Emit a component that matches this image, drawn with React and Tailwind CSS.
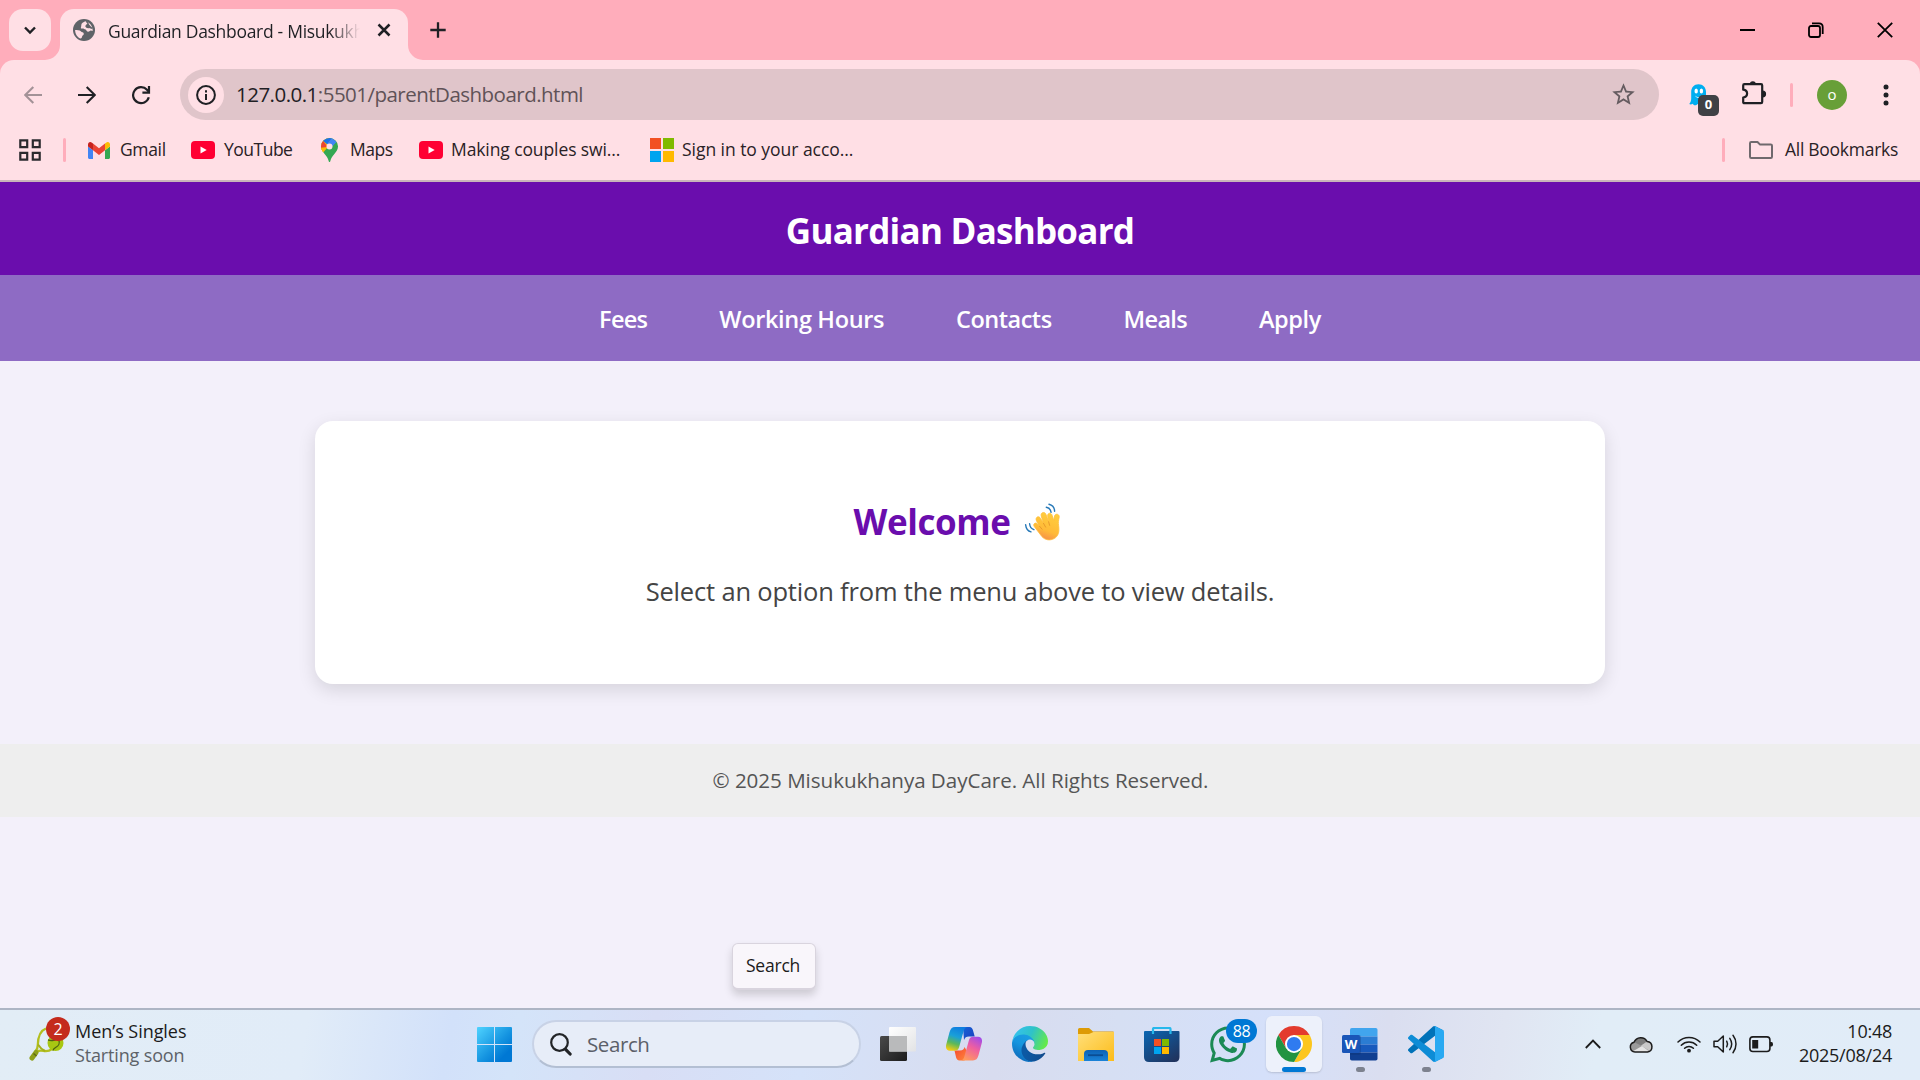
import { FaWhatsapp } from "react-icons/fa";
import { MdStarBorder } from "react-icons/md";

/* ---------- Browser icons ---------- */

function GlobeIcon() {
  return (
    <svg width="22" height="22" viewBox="0 0 22 22">
      <circle cx="11" cy="11" r="11" fill="#5f6368" />
      <path d="M12.2 2.3C10.6 3.4 8.2 4 8.3 5.9c.1 1.5-.6 2.4-.4 3.4.3 1.3 2.6.6 4.1 1 1.5.5 1.4 2.2 2.9 2.5 1.4.2 1.6-1.3 3-1.3.7 0 1.300.2 1.800.5.200-3.800-2.200-8.600-7.500-9.700z" fill="#ffdfe5" />
      <path d="M2.100 10.900c1.700.2 4.700-.1 5.700 1.300.8 1.200 3 .7 3 2.500 0 1.500-1.500 1.500-1.700 2.900-.1 1-.5 1.700-1.200 2C4.500 18.300 2.100 15.200 2.100 10.900z" fill="#ffdfe5" />
      <path d="M13.300 2.200c.6 1.400 1.900 1.300 1.700 2.600-.2 1-1.700 1-2 2.200-.3 1 1.300 1.700 2.600 1.500 1.700-.3 2.300.8 3.800.8" stroke="#5f6368" strokeWidth="1.300" fill="#5f6368" />
    </svg>
  );
}

function ChevronDown() {
  return (
    <svg width="12" height="9" viewBox="0 0 12 9" fill="none" stroke="#1f2024" strokeWidth="2.400">
      <path d="M1 1.500l5 5 5-5" />
    </svg>
  );
}

function CrossIcon() {
  return (
    <svg width="14" height="14" viewBox="0 0 14 14" fill="none" stroke="#1f2024" strokeWidth="2.500">
      <path d="M1.500 1.500l11 11M12.500 1.500l-11 11" />
    </svg>
  );
}

function PlusIcon() {
  return (
    <svg width="16" height="16" viewBox="0 0 16 16" fill="none" stroke="#1f2024" strokeWidth="2.300">
      <path d="M8 .3v15.400M.3 8h15.400" />
    </svg>
  );
}

function ArrowIcon({ className }) {
  return (
    <svg width="18" height="18" viewBox="0 0 18 18" fill="none" stroke="currentColor" strokeWidth="2.100" className={className}>
      <path d="M0 9h16.500M8.700.9L16.800 9l-8.100 8.100" />
    </svg>
  );
}

function ReloadIcon() {
  return (
    <svg width="20" height="20" viewBox="0 0 20 20" fill="none" stroke="#1f2024" strokeWidth="2.200">
      <path d="M17.800 12.300A8 8 0 1 1 16 4.700L18 6.900" />
      <path d="M18 1v6.700h-6.600" />
    </svg>
  );
}

function InfoIcon() {
  return (
    <svg width="20" height="20" viewBox="0 0 20 20" fill="none" stroke="#1f2024" strokeWidth="2">
      <circle cx="10" cy="10" r="8.900" />
      <path d="M10 9v6M10 5.200v2.200" />
    </svg>
  );
}

function GhostIcon() {
  return (
    <svg width="18" height="22" viewBox="0 0 18 22">
      <path d="M9.500.3C5 .3 2.200 3.600 2.200 8v6.500c0 2.300-.8 4.300-2 5.600 1.300.6 2.600.3 3.400-.3.600.9 1.300 1.500 2.400 1.500s1.900-.7 2.600-1.400c.8.8 1.600 1.300 2.700 1.200 4-.5 5.700-3.100 5.700-6.600V8C17 3.600 14 .3 9.500.3z" fill="#00aef0" />
      <ellipse cx="7.200" cy="7" rx="1.700" ry="2.500" fill="#fff" />
      <ellipse cx="12.400" cy="7" rx="1.700" ry="2.500" fill="#fff" />
      <path d="M6 11.500c2 2 5.500 2 7.500 0-.5 2.800-6.500 3.300-7.500 0z" fill="#fff" />
    </svg>
  );
}

function PuzzleIcon() {
  return (
    <svg width="26" height="26" viewBox="0 0 26 26" fill="none" stroke="#1f2024" strokeWidth="2.200" strokeLinejoin="round">
      <path d="M3.400 4.200h16.600q1.200 0 1.200 1.200v16.600q0 1.200-1.200 1.200H3.400q-1.200 0-1.200-1.200v-4.400c2.600-.4 3.900-1.800 3.900-4s-1.300-3.500-3.900-3.900V5.400q0-1.200 1.200-1.200z" />
      <path d="M8.800 4.200a3 3 0 0 1 6 0z" fill="#1f2024" stroke="none" />
      <path d="M21.600 11a2.900 2.900 0 0 1 0 5.800z" fill="#1f2024" strokeWidth="1.200" />
    </svg>
  );
}

function AppsGridIcon() {
  return (
    <svg width="22" height="22" viewBox="0 0 22 22" fill="none" stroke="#2a2a2e" strokeWidth="2.200">
      <path d="M1.300 1.300h6.900v6.900H1.300zM13.800 1.300h6.900v6.900h-6.900zM1.300 13.800h6.900v6.900H1.300zM13.800 13.800h6.900v6.900h-6.900z" />
    </svg>
  );
}

function GmailIcon() {
  return (
    <svg width="22" height="17" viewBox="52 42 88 66" preserveAspectRatio="none">
      <path fill="#4285f4" d="M58 108h14V74L52 59v43c0 3.320 2.690 6 6 6" />
      <path fill="#34a853" d="M120 108h14c3.320 0 6-2.690 6-6V59l-20 15" />
      <path fill="#fbbc04" d="M120 48v26l20-15v-8c0-7.420-8.470-11.650-14.400-7.200" />
      <path fill="#ea4335" d="M72 74V48l24 18 24-18v26L96 92" />
      <path fill="#c5221f" d="M52 51v8l20 15V48l-5.600-4.200c-5.940-4.450-14.400-.22-14.400 7.200" />
    </svg>
  );
}

function YouTubeIcon() {
  return (
    <svg width="24" height="18" viewBox="0 0 24 18">
      <rect width="24" height="18" rx="4" fill="#ff0033" />
      <path d="M9.500 5.600v6.800L15.700 9z" fill="#fff" />
    </svg>
  );
}

function MapsIcon() {
  return (
    <svg width="17" height="24" viewBox="0 0 17 24">
      <defs>
        <clipPath id="pin">
          <path d="M8.500 0A8.400 8.400 0 0 0 0 8.500c0 3.400 1.900 5.300 4 8 1.800 2.300 3 3.700 3.500 6 .3 1.400.6 1.500 1 1.500s.7-.1 1-1.500c.5-2.300 1.700-3.700 3.500-6 2.100-2.700 4-4.600 4-8A8.400 8.400 0 0 0 8.500 0z" />
        </clipPath>
      </defs>
      <g clipPath="url(#pin)">
        <rect width="17" height="24" fill="#34a853" />
        <path d="M0 17L13 2 6-1H-1z" fill="#fbbc04" />
        <path d="M-1 17.500L8.500 6.500 5 3-1 8z" fill="#fbbc04" />
        <path d="M-1 10L6.500 9 2 2.500-1 5z" fill="#ea4335" />
        <path d="M2 2.800L6.300 6.600 11.500 0H2z" fill="#1a73e8" />
        <path d="M11.200-.1L6 6l3.500 4.200L15.500 4z" fill="#4285f4" />
      </g>
      <circle cx="8.500" cy="8.400" r="3" fill="#ffdfe5" />
    </svg>
  );
}

function MicrosoftIcon() {
  return (
    <div className="grid size-6 grid-cols-2 gap-0.5">
      <div className="bg-[#f25022]" />
      <div className="bg-[#7fba00]" />
      <div className="bg-[#00a4ef]" />
      <div className="bg-[#ffb900]" />
    </div>
  );
}

function FolderOutlineIcon() {
  return (
    <svg width="24" height="18" viewBox="0 0 24 18" fill="none" stroke="#6f696d" strokeWidth="2" strokeLinejoin="round">
      <path d="M1 2.200Q1 1 2.200 1h6.300l2.600 2.600h10.700Q23 3.600 23 4.800v11Q23 17 21.800 17H2.200Q1 17 1 15.800z" />
    </svg>
  );
}

/* ---------- Page emoji ---------- */

function WaveEmoji() {
  return (
    <svg width="38" height="38" viewBox="0 0 38 38">
      <defs>
        <linearGradient id="skin" x1=".7" y1="0" x2=".35" y2="1">
          <stop offset="0" stopColor="#ffcf3e" />
          <stop offset=".65" stopColor="#ffba38" />
          <stop offset="1" stopColor="#f58b4c" />
        </linearGradient>
      </defs>
      <path d="M10.200 23.500c-1.700-2.500 1.600-4.700 3.300-2.600l2 2.300-3-5.300c-1.700-3.600 2.200-5.700 4-2.600l3 5-2.300-7.300c-1-3.600 3.500-5 4.800-1.500l2.600 7.300-.9-5.800c-.4-3.300 3.600-3.800 4.400-.7l1.700 5.500c.4-2 .2-3.800.9-5.300 1.500-2.500 5-1 4.500 1.700-.7 3.400-1.100 5.200-.6 8.600 1 6.500-.5 10.500-4.300 12.700-4.200 2.400-9.200 1.600-12.300-1.800z" fill="url(#skin)" stroke="#ffbf3a" strokeWidth=".8" />
      <path d="M15.500 23.200l2.600 3M19.500 20.300l2.100 3.800M24.600 18.800l1 3.500" stroke="#e89a2b" strokeWidth="1" fill="none" strokeLinecap="round" />
      <g stroke="#2779b8" strokeWidth="1.400" fill="none" strokeLinecap="round">
        <path d="M22.300 4.300c2.500.4 4.300 2.200 4.800 5" />
        <path d="M25 1.200c3.200.8 5.500 3.400 5.600 7" />
        <path d="M5.600 20.700c.3 3 1.800 5.100 4.300 6" />
        <path d="M1.600 21.600c.4 3.800 2.300 6.500 5.400 7.300" />
      </g>
    </svg>
  );
}

/* ---------- Taskbar icons ---------- */

function TennisIcon() {
  return (
    <svg width="36" height="34" viewBox="0 0 36 34" fill="none">
      <path d="M17 1.500C11.500 3.500 9 9 8.800 18c0 3-.8 5-2.800 7.300 3-2 6-2 9-1.300 3 .5 5.500 0 8-2" stroke="#b3bf1f" strokeWidth="2.300" />
      <path d="M9 17.500c1.500 2.500 3 4.500 7 6.500" stroke="#a4b01c" strokeWidth="2" />
      <path d="M3 31l4-5.500" stroke="#8ea019" strokeWidth="5" strokeLinecap="round" />
      <path d="M4.500 26.500l3 2.500" stroke="#5f6b14" strokeWidth="1.600" />
      <circle cx="26.500" cy="16" r="8" fill="#a8c712" />
      <path d="M19 13c4 .5 7 1.500 8-1M24 23.500c.5-4 8-3 6-10" stroke="#4f6412" strokeWidth="1.300" />
    </svg>
  );
}

function StartIcon() {
  return (
    <svg width="35" height="35" viewBox="0 0 35 35">
      <defs>
        <linearGradient id="win" x1="0" y1="0" x2="1" y2="1">
          <stop offset="0" stopColor="#4fd3ff" />
          <stop offset=".55" stopColor="#1493e0" />
          <stop offset=".8" stopColor="#0078d4" />
        </linearGradient>
        <clipPath id="winclip">
          <path d="M1 0H17V17H0V1Q0 0 1 0zM18 0h16q1 0 1 1v16H18zM0 18h17v17H1q-1 0-1-1zM18 18h17v16q0 1-1 1H18z" />
        </clipPath>
      </defs>
      <rect width="35" height="35" fill="url(#win)" clipPath="url(#winclip)" />
    </svg>
  );
}

function SearchGlyph() {
  return (
    <svg width="22" height="23" viewBox="0 0 22 23" fill="none" stroke="#222427">
      <circle cx="9.500" cy="9.500" r="8.300" strokeWidth="2.200" />
      <path d="M15.600 16.300l4.500 4.700" strokeWidth="3.200" strokeLinecap="round" />
    </svg>
  );
}

function TaskViewIcon() {
  return (
    <svg width="36" height="34" viewBox="0 0 36 34">
      <defs>
        <linearGradient id="tvd" x1="0" y1="0" x2="1" y2="1">
          <stop offset="0" stopColor="#4a4a4a" />
          <stop offset="1" stopColor="#1c1c1c" />
        </linearGradient>
        <linearGradient id="tvl" x1="0" y1="0" x2="1" y2="1">
          <stop offset="0" stopColor="#fff" />
          <stop offset="1" stopColor="#e2e3e5" />
        </linearGradient>
      </defs>
      <rect y="9" width="27" height="25" rx="1.500" fill="url(#tvd)" />
      <rect x="9" width="27" height="24.500" rx="1" fill="url(#tvl)" />
      <path d="M9 9h18v15.500H9z" fill="#b9babb" />
    </svg>
  );
}

function CopilotIcon() {
  return (
    <svg width="36" height="34" viewBox="0 0 36 34">
      <defs>
        <linearGradient id="cp1" x1=".6" y1="0" x2=".3" y2="1">
          <stop offset="0" stopColor="#0f7de0" />
          <stop offset=".4" stopColor="#1aa0d8" />
          <stop offset=".7" stopColor="#5bb85a" />
          <stop offset="1" stopColor="#f2cc12" />
        </linearGradient>
        <linearGradient id="cp2" x1=".8" y1="0" x2=".3" y2="1">
          <stop offset="0" stopColor="#a24ce8" />
          <stop offset=".45" stopColor="#ee5fa0" />
          <stop offset="1" stopColor="#ff9a5e" />
        </linearGradient>
        <linearGradient id="cp3" x1="0" y1="0" x2="1" y2="1">
          <stop offset="0" stopColor="#1463d6" />
          <stop offset="1" stopColor="#1d3fbf" />
        </linearGradient>
        <linearGradient id="cp4" x1="0" y1="0" x2="1" y2="1">
          <stop offset="0" stopColor="#f5452f" />
          <stop offset="1" stopColor="#ff8a3c" />
        </linearGradient>
      </defs>
      <path d="M17 0h6.500c2 0 3 1.500 3.400 3l1.800 6.500H23c-3 0-4 1-5 3.500z" fill="url(#cp3)" />
      <path d="M18.500 33.500h-5c-2 0-3-1.500-3.400-3L8.500 23.500H14c3 0 4-1.500 4.500-3.500l3 5z" fill="url(#cp4)" />
      <path d="M9 0h12c-2 .5-2.800 2-3.500 4.500L13 20.500c-.8 2.200-2 3.200-4.200 3.200H4c-3.500 0-4.700-2.700-3.700-6.500l3.200-12C4.500 1.800 6 0 9 0z" fill="url(#cp1)" />
      <path d="M27 33.500H15c2-.5 2.800-2 3.500-4.500L23 13c.8-2.200 2-3.200 4.200-3.200H32c3.500 0 4.700 2.700 3.700 6.500l-3.200 12c-1 3.400-2.500 5.200-5.500 5.200z" fill="url(#cp2)" />
    </svg>
  );
}

function EdgeIcon() {
  return (
    <svg width="36" height="36" viewBox="0 0 256 256">
      <defs>
        <linearGradient id="e1" x1=".2" y1="0" x2="1" y2="0">
          <stop offset="0" stopColor="#0c59a4" />
          <stop offset="1" stopColor="#114a8b" />
        </linearGradient>
        <linearGradient id="e2" x1=".7" y1=".1" x2=".3" y2="1">
          <stop offset="0" stopColor="#1b9de2" />
          <stop offset=".4" stopColor="#1595df" />
          <stop offset="1" stopColor="#0d67b8" />
        </linearGradient>
        <linearGradient id="e3" x1="0" y1=".3" x2="1" y2=".6">
          <stop offset="0" stopColor="#35c1f1" />
          <stop offset=".5" stopColor="#2fc2c8" />
          <stop offset="1" stopColor="#66eb48" />
        </linearGradient>
      </defs>
      <path fill="url(#e1)" d="M231 190.500c-3.400 1.800-6.900 3.400-10.500 4.700a101.500 101.500 0 0 1-35.900 6.400c-47.300 0-88.500-32.500-88.500-74.300 0-11.400 6.300-21.900 16.400-27.300-42.800 1.800-53.800 46.400-53.800 72.500 0 73.900 68.100 81.400 82.800 81.400 7.900 0 19.800-2.300 27-4.600l1.300-.4a128.300 128.300 0 0 0 66.600-52.800 4 4 0 0 0-5.400-5.600z" />
      <path fill="url(#e2)" d="M105.700 241.400a79.200 79.200 0 0 1-22.700-21.300 80.700 80.700 0 0 1 29.500-120c3.200-1.500 8.500-4.100 15.600-4a32.400 32.400 0 0 1 25.700 13 31.900 31.900 0 0 1 6.300 18.700c0-.2 24.500-79.600-80-79.600-43.900 0-80 41.700-80 78.200 0 19.300 4.100 38.600 12.100 56a128 128 0 0 0 156.400 67 75.500 75.500 0 0 1-62.800-8z" />
      <path fill="url(#e3)" d="M152.300 148.900c-.8 1-3.300 2.500-3.300 5.700 0 2.600 1.700 5.100 4.700 7.200 14.400 10 41.500 8.700 41.600 8.700 10.700 0 21.100-2.900 30.300-8.300a61.400 61.400 0 0 0 30.400-52.900c.3-22.400-8-37.300-11.300-43.900C223.500 23.900 177.700 0 128 0A128 128 0 0 0 0 126.200c.5-36.500 36.800-66 80-66 3.500 0 23.500.3 42 10.100 16.300 8.600 24.900 18.900 30.800 29.200 6.200 10.700 7.300 24.100 7.300 29.500 0 5.300-2.700 13.300-7.800 19.900z" />
    </svg>
  );
}

function ExplorerIcon() {
  return (
    <svg width="36" height="33" viewBox="0 0 36 33">
      <defs>
        <linearGradient id="fx" x1="0" y1="0" x2="1" y2="1">
          <stop offset="0" stopColor="#ffdf7a" />
          <stop offset="1" stopColor="#fcbc19" />
        </linearGradient>
        <linearGradient id="fb" x1="0" y1="0" x2="0" y2="1">
          <stop offset="0" stopColor="#0e62b4" />
          <stop offset="1" stopColor="#1a83d8" />
        </linearGradient>
      </defs>
      <path d="M0 7V1.500Q0 0 1.500 0H11l4 3.500h20q1 0 1 1V7z" fill="#dd9b05" />
      <path d="M0 6h11l4.500-2H36v29H0z" fill="url(#fx)" />
      <path d="M6 33v-7q0-4 4-4h16q4 0 4 4v7z" fill="url(#fb)" />
      <path d="M10 27.200h15" stroke="#0b4d93" strokeWidth="1.800" />
    </svg>
  );
}

function StoreIcon() {
  return (
    <svg width="36" height="35" viewBox="0 0 36 35">
      <defs>
        <linearGradient id="st" x1="0" y1="0" x2=".8" y2="1">
          <stop offset="0" stopColor="#0a66b2" />
          <stop offset="1" stopColor="#20345f" />
        </linearGradient>
      </defs>
      <path d="M0 5Q0 4 1 4h33.500q1 0 1 1v25q0 5-5 5H5q-5 0-5-5z" fill="url(#st)" />
      <path d="M9 7V2q0-1 1-1h15.500q1 0 1 1v5" fill="none" stroke="#27b8ec" strokeWidth="2.200" />
      <path d="M10 12h7v7h-7z" fill="#f25022" />
      <path d="M18 12h7v7h-7z" fill="#7fba00" />
      <path d="M10 20h7v7h-7z" fill="#00a4ef" />
      <path d="M18 20h7v7h-7z" fill="#ffb900" />
    </svg>
  );
}

function ChromeIcon() {
  return (
    <svg width="36" height="36" viewBox="0 0 48 48">
      <path d="M24 12h20.780A24 24 0 0 0 3.210 12L13.610 30z" fill="#e33b2e" />
      <path d="M34.390 30L24 48A24 24 0 0 0 44.780 12H24z" fill="#fcc61e" />
      <path d="M13.610 30L3.210 12A24 24 0 0 0 24 48l10.390-18z" fill="#229342" />
      <circle cx="24" cy="24" r="12" fill="#fff" />
      <circle cx="24" cy="24" r="9.500" fill="#2f7bf0" />
    </svg>
  );
}

function WordIcon() {
  return (
    <div className="relative h-[33px] w-9">
      <svg width="36" height="33" viewBox="0 0 36 33">
        <defs>
          <clipPath id="wclip">
            <rect x="8" width="27.500" height="32.500" rx="1.800" />
          </clipPath>
        </defs>
        <g clipPath="url(#wclip)">
          <path d="M8 0h28v8.500H8z" fill="#41a5ee" />
          <path d="M8 8.500h28v8H8z" fill="#2b7cd3" />
          <path d="M8 16.500h28v8H8z" fill="#185abd" />
          <path d="M8 24.500h28V33H8z" fill="#103f91" />
        </g>
        <path d="M8 7h9q1.800 0 1.800 1.800V25q0 1.800-1.800 1.800H8z" fill="#0b2f6b" opacity=".35" />
        <rect y="7" width="17.800" height="18" rx="1.600" fill="#1a56b8" />
      </svg>
      <span className="absolute top-[7px] left-0 w-[18px] text-center text-[13px] leading-[18px] font-bold text-white">W</span>
    </div>
  );
}

function CodeIcon() {
  return (
    <svg width="36" height="36" viewBox="0 0 100 100">
      <path fill="#0072b8" d="M96.460 10.800L75.860.88C73.470-.27 70.620.21 68.750 2.080L1.300 63.580c-1.820 1.660-1.810 4.510 0 6.170l5.510 5c1.490 1.350 3.720 1.450 5.320.24L93.360 13.370C96.090 11.300 100 13.250 100 16.670v-.24c0-2.400-1.380-4.590-3.540-5.630z" />
      <path fill="#0d8cd6" d="M96.460 89.200l-20.600 9.920c-2.390 1.150-5.240.67-7.110-1.200L1.300 36.420c-1.820-1.660-1.810-4.510 0-6.170l5.510-5c1.490-1.350 3.720-1.450 5.320-.24l81.230 61.620c2.730 2.070 6.640.12 6.640-3.300v.24c0 2.400-1.380 4.590-3.540 5.630z" />
      <path fill="#29a9f2" d="M75.860 99.130c-2.390 1.150-5.240.66-7.110-1.210 2.310 2.310 6.250.67 6.250-2.590V4.670c0-3.260-3.940-4.890-6.250-2.590C70.620.21 73.470-.27 75.860.87l20.600 9.910c2.160 1.040 3.540 3.230 3.540 5.630v67.180c0 2.400-1.380 4.590-3.540 5.630z" />
    </svg>
  );
}

function CloudIcon() {
  return (
    <svg width="24" height="17" viewBox="0 0 24 17">
      <defs>
        <clipPath id="cloud">
          <path d="M6 16a5 5 0 0 1-1-9.800A7.300 7.300 0 0 1 18.200 5.500 5.300 5.300 0 0 1 18.500 16z" />
        </clipPath>
      </defs>
      <g clipPath="url(#cloud)">
        <path d="M0 0h24v17H0z" fill="#9a9a9a" />
        <path d="M5 6l8 4 6-6V0H5z" fill="#7d7d7d" />
        <path d="M12 9.500L19 5l5 4v8z" fill="#c9c9c9" />
        <path d="M1 17l12-7 8 6v1z" fill="#e4e4e4" />
      </g>
      <path d="M6 16a5 5 0 0 1-1-9.800A7.300 7.300 0 0 1 18.200 5.500 5.300 5.300 0 0 1 18.500 16z" fill="none" stroke="#1c1c1c" strokeWidth="1.500" />
    </svg>
  );
}

function WifiIcon() {
  return (
    <svg width="24" height="18" viewBox="0 0 24 18" fill="none" stroke="#1c1c1c" strokeWidth="1.500" strokeLinecap="round">
      <path d="M1 7a15.500 15.500 0 0 1 22 0M4.300 10.300a10.900 10.900 0 0 1 15.400 0M7.600 13.300a6.200 6.200 0 0 1 8.800 0" />
      <circle cx="12" cy="15.700" r="1.900" fill="#1c1c1c" stroke="none" />
    </svg>
  );
}

function SpeakerIcon() {
  return (
    <svg width="25" height="20" viewBox="0 0 25 20" fill="none" stroke="#1c1c1c" strokeWidth="1.500" strokeLinecap="round" strokeLinejoin="round">
      <path d="M1 7.200h3.700L10.300 2v16l-5.600-5.200H1z" />
      <path d="M13.700 7.200c1 1.700 1 3.900 0 5.600M16.800 4.400c2.300 3.400 2.300 7.800 0 11.200M20 1.300c4 5.200 4 12.200 0 17.400" />
    </svg>
  );
}

function BatteryIcon() {
  return (
    <svg width="25" height="17" viewBox="0 0 25 17">
      <rect x=".9" y=".9" width="20" height="14.600" rx="3" fill="none" stroke="#1c1c1c" strokeWidth="1.600" />
      <path d="M21 6h1.500q1.500 0 1.500 2.200t-1.500 2.200H21z" fill="#1c1c1c" />
      <rect x="3.200" y="4" width="6" height="8.500" fill="#1c1c1c" />
    </svg>
  );
}

/* ---------- Sections ---------- */

function TabStrip() {
  return (
    <div className="flex h-[60px] items-start bg-[#ffadbb] pt-[9px]">
      <button className="ml-[9px] flex size-[42px] items-center justify-center rounded-[14px] bg-[#ffdfe5]">
        <ChevronDown />
      </button>
      <div className="relative ml-[9px] flex h-[51px] w-[348px] items-center rounded-t-[14px] bg-[#ffdfe5] pb-[9px] pl-[13px]">
        <svg className="absolute -left-[15px] bottom-0" width="15" height="15">
          <path d="M15 0v15H0A15 15 0 0 0 15 0z" fill="#ffdfe5" />
        </svg>
        <svg className="absolute -right-[15px] bottom-0" width="15" height="15">
          <path d="M0 0v15h15A15 15 0 0 1 0 0z" fill="#ffdfe5" />
        </svg>
        <GlobeIcon />
        <div className="mt-[2px] ml-[13px] w-[252px] bg-linear-to-r from-[#1f2024] from-88% to-transparent bg-clip-text text-[17.5px] leading-6 tracking-[-0.3px] whitespace-nowrap text-transparent">
          Guardian Dashboard - Misukukh
        </div>
        <div className="ml-[17px]">
          <CrossIcon />
        </div>
      </div>
      <div className="mt-[13px] ml-[22px]">
        <PlusIcon />
      </div>
      <div className="mt-[13px] mr-[27px] ml-auto flex items-center gap-[53px]">
        <div className="h-0.5 w-[15px] bg-black" />
        <svg width="16" height="16" viewBox="0 0 16 16" fill="none" stroke="#000" strokeWidth="1.800">
          <rect x="1" y="4" width="11" height="11" rx="2" />
          <path d="M4 1.300h7Q14.700 1.300 14.700 5v7" />
        </svg>
        <svg width="16" height="16" viewBox="0 0 16 16" fill="none" stroke="#000" strokeWidth="1.800">
          <path d="M.8.8l14.400 14.400M15.200.8L.8 15.200" />
        </svg>
      </div>
    </div>
  );
}

function Toolbar() {
  return (
    <div className="bg-[#ffadbb]">
      <div className="flex h-[69px] items-center rounded-t-[14px] bg-[#ffdfe5]">
        <ArrowIcon className="ml-6 rotate-180 text-[#a39297]" />
        <ArrowIcon className="ml-9 text-[#1f2024]" />
        <div className="ml-[35px]">
          <ReloadIcon />
        </div>
        <div className="ml-[29px] flex h-[51px] w-[1479px] items-center rounded-full bg-[#e0c5ca] pl-2">
          <div className="flex size-9 items-center justify-center rounded-full bg-[#ffdfe5]">
            <InfoIcon />
          </div>
          <div className="-mt-[1px] ml-3 text-[20.5px] tracking-[-0.52px] text-[#5f5257]">
            <span className="text-[#1f2024]">127.0.0.1</span>:5501/parentDashboard.html
          </div>
          <MdStarBorder className="mr-[22px] ml-auto size-[27px] text-[#655c60]" />
        </div>
        <div className="relative ml-[30px] h-[22px] w-[30px]">
          <GhostIcon />
          <div className="absolute top-[11px] left-[9px] flex size-[21px] items-center justify-center rounded-[5px] bg-[#3f4145] text-[13px] font-bold text-white">
            0
          </div>
        </div>
        <div className="-mt-[3px] ml-[22px]">
          <PuzzleIcon />
        </div>
        <div className="ml-[23px] h-6 w-[3px] rounded-sm bg-[#ffadbb]" />
        <div className="ml-[24px] flex size-[30px] items-center justify-center rounded-full bg-[#689f38] pb-px text-[15px] text-white">
          o
        </div>
        <div className="ml-[37px] flex flex-col gap-1">
          <div className="size-1 rounded-full bg-[#1f2024] ring-[0.5px] ring-[#1f2024]" />
          <div className="size-1 rounded-full bg-[#1f2024] ring-[0.5px] ring-[#1f2024]" />
          <div className="size-1 rounded-full bg-[#1f2024] ring-[0.5px] ring-[#1f2024]" />
        </div>
      </div>
    </div>
  );
}

function BookmarksBar() {
  const label = "-mt-[2px] whitespace-nowrap";
  return (
    <div className="flex h-[53px] items-center border-b-2 border-[#c9b4ba] bg-[#ffdfe5] pb-[9px] pl-[19px] text-[17.5px] text-[#2a2226]">
      <AppsGridIcon />
      <div className="ml-[22px] h-6 w-[3px] rounded-sm bg-[#ffadbb]" />
      <div className="ml-[22px] flex w-[103px] items-center gap-[10px]">
        <GmailIcon />
        <span className={label + " tracking-[-0.35px]"}>Gmail</span>
      </div>
      <div className="flex w-[130px] items-center gap-[9px]">
        <YouTubeIcon />
        <span className={label + " tracking-[-0.5px]"}>YouTube</span>
      </div>
      <div className="flex w-[98px] items-center gap-3">
        <MapsIcon />
        <span className={label + " tracking-[-0.5px]"}>Maps</span>
      </div>
      <div className="flex w-[231px] items-center gap-[8px]">
        <YouTubeIcon />
        <span className={label + " tracking-[-0.1px]"}>Making couples swi...</span>
      </div>
      <div className="flex items-center gap-2">
        <MicrosoftIcon />
        <span className={label + " tracking-[-0.04px]"}>Sign in to your acco...</span>
      </div>
      <div className="ml-auto h-6 w-[3px] rounded-sm bg-[#ffadbb]" />
      <div className="ml-6 flex w-[171px] items-center gap-3">
        <FolderOutlineIcon />
        <span className={label + " tracking-[-0.28px]"}>All Bookmarks</span>
      </div>
    </div>
  );
}

function Page() {
  return (
    <main className="relative flex-1 bg-[#f3f0fa]">
      <header className="flex h-[93px] items-center justify-center bg-[#6a0dad] pt-[3px]">
        <h1 className="text-[35px] leading-none font-bold tracking-[-0.75px] text-white">Guardian Dashboard</h1>
      </header>
      <nav className="flex h-[86px] items-center justify-center gap-[72px] bg-[#8e6bc4] pt-1 text-[23.5px] font-semibold tracking-[-0.4px] text-white">
        <a className="tracking-[-0.7px]">Fees</a>
        <a className="tracking-[-0.35px]">Working Hours</a>
        <a className="tracking-[-0.5px]">Contacts</a>
        <a className="tracking-[-0.7px]">Meals</a>
        <a>Apply</a>
      </nav>
      <section className="mx-auto mt-[60px] flex h-[263px] w-[1290px] flex-col items-center rounded-[18px] bg-white pt-[79px] shadow-[0_6px_18px_rgba(0,0,0,0.12)]">
        <h2 className="mr-[5px] flex h-11 items-center gap-[13px] text-[35px] leading-[44px] font-bold tracking-[-0.4px] text-[#6a0dad]">
          Welcome
          <WaveEmoji />
        </h2>
        <p className="mt-[29px] text-[25.5px] leading-9 tracking-[-0.18px] text-[#444]">
          Select an option from the menu above to view details.
        </p>
      </section>
      <footer className="mt-[60px] flex h-[73px] items-center justify-center bg-[#eee] pl-px text-[20.6px] tracking-[-0.04px] text-[#555]">
        © 2025 Misukukhanya DayCare. All Rights Reserved.
      </footer>
      <div className="absolute bottom-[18px] left-[732px] flex h-[47px] w-[84px] items-center justify-center rounded-md border border-b-2 border-[#d9d4de] bg-[#f9f6fb] pr-0.5 pb-0.5 text-[17.5px] tracking-[-0.2px] text-[#1c1c1c] shadow-[0_5px_9px_rgba(0,0,0,0.16)]">
        Search
      </div>
    </main>
  );
}

function Slot({ children, running }) {
  return (
    <div className="relative flex h-14 w-[66px] items-center justify-center">
      {children}
      {running && <div className="absolute bottom-0 h-[5px] w-[9px] rounded-full bg-[#7d828f]" />}
    </div>
  );
}

function Taskbar() {
  return (
    <div className="flex h-[72px] items-center border-t-2 border-[#adb5c4] bg-[linear-gradient(100deg,#e2edf6_0%,#e1ecf8_16%,#d2e1fa_23.5%,#d4e4f9_27%,#d8def5_34%,#d5e2f9_42%,#d8dcef_52%,#d6dff3_58%,#d5e0fa_66%,#dadef0_72%,#e0e5f2_78%,#e1edf7_83%,#e1ecf8_100%)] pb-[2px]">
      <div className="relative ml-[29px]">
        <TennisIcon />
        <div className="absolute -top-[10px] left-[17px] flex size-6 items-center justify-center rounded-full bg-[#c42b1c] text-[16px] text-white">2</div>
      </div>
      <div className="-mt-[2px] ml-[10px] w-[402px] text-[18px] leading-6">
        <div className="tracking-[-0.05px] text-[#1b1b1b]">Men’s Singles</div>
        <div className="tracking-[-0.15px] text-[#5d6268]">Starting soon</div>
      </div>
      <StartIcon />
      <div className="ml-[20px] flex h-12 w-[329px] items-center rounded-full border-2 border-[#c8d2e6] border-b-[#b3bfd3] bg-[#e7edf8] pl-4">
        <SearchGlyph />
        <span className="ml-[15px] text-[20.5px] tracking-[-0.4px] text-[#5b6069]">Search</span>
      </div>
      <div className="ml-[4px] flex">
        <Slot><TaskViewIcon /></Slot>
        <Slot><CopilotIcon /></Slot>
        <Slot><EdgeIcon /></Slot>
        <Slot><ExplorerIcon /></Slot>
        <Slot><StoreIcon /></Slot>
        <Slot>
          <FaWhatsapp className="h-[41px] w-9 text-[#1b8a55]" />
          <div className="absolute top-[3px] left-[31px] flex h-6 w-[31px] items-center justify-center rounded-full bg-[#0078d4] text-[16px] tracking-[-0.3px] text-white">88</div>
        </Slot>
        <Slot>
          <div className="relative flex size-14 items-center justify-center rounded-md bg-[#edf1fb] shadow-[0_1px_2px_rgba(0,0,0,0.15)]">
            <ChromeIcon />
            <div className="absolute bottom-0 h-[5px] w-6 rounded-full bg-[#0078d4]" />
          </div>
        </Slot>
        <Slot running><WordIcon /></Slot>
        <Slot running><CodeIcon /></Slot>
      </div>
      <div className="mr-[28px] ml-auto flex items-center">
        <svg width="16" height="10" viewBox="0 0 16 10" fill="none" stroke="#1c1c1c" strokeWidth="1.800">
          <path d="M.8 9L8 1.600 15.200 9" />
        </svg>
        <div className="ml-7"><CloudIcon /></div>
        <div className="ml-6"><WifiIcon /></div>
        <div className="ml-3"><SpeakerIcon /></div>
        <div className="ml-[11px]"><BatteryIcon /></div>
        <div className="-mt-[2px] ml-[17px] w-[101px] text-right text-[18px] leading-6 tracking-[-0.25px] text-[#1b1b1b]">
          <div>10:48</div>
          <div>2025/08/24</div>
        </div>
      </div>
    </div>
  );
}

export default function App() {
  return (
    <div className="flex h-[1080px] w-[1920px] flex-col overflow-hidden font-['Open_Sans','Noto_Sans',sans-serif]">
      <TabStrip />
      <Toolbar />
      <BookmarksBar />
      <Page />
      <Taskbar />
    </div>
  );
}
